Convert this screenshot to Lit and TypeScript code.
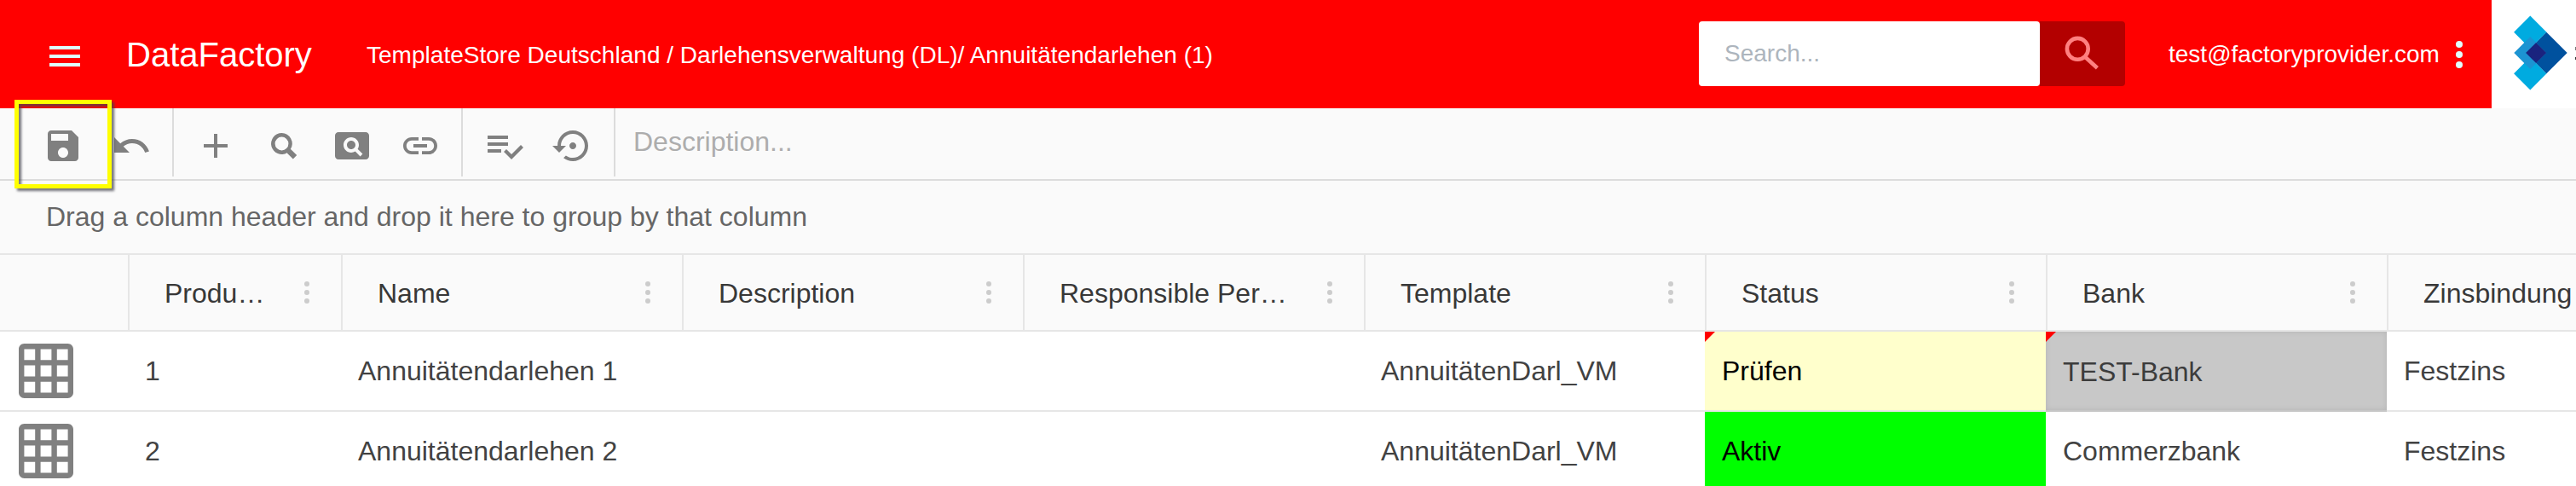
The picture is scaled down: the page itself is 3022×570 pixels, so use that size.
import { LitElement, html, css, svg } from "lit";
import { customElement, property } from "lit/decorators.js";
import { classMap } from "lit/directives/class-map.js";

const ICONS: Record<string, string> = {
  save: "M17 3H5c-1.11 0-2 .9-2 2v14c0 1.1.89 2 2 2h14c1.1 0 2-.9 2-2V7l-4-4zm-5 16c-1.66 0-3-1.34-3-3s1.34-3 3-3 3 1.34 3 3-1.34 3-3 3zm3-10H5V5h10v4z",
  undo: "M12.5 8c-2.65 0-5.05.99-6.9 2.6L2 7v9h9l-3.62-3.62c1.39-1.16 3.16-1.88 5.12-1.88 3.54 0 6.55 2.31 7.6 5.5l2.37-.78C21.08 11.03 17.15 8 12.5 8z",
  add: "M19 13h-6v6h-2v-6H5v-2h6V5h2v6h6v2z",
  search: "M10.75 4.5a6.25 6.25 0 1 0 3.2 11.62l.15.38 3.3 3.2 2.2-2.2-3.3-3.3-.4-.15A6.25 6.25 0 0 0 10.75 4.5zm0 2.3a3.95 3.95 0 1 1 0 7.9 3.95 3.95 0 0 1 0-7.9z",
  pageview: "M11.5 9C10.12 9 9 10.12 9 11.5s1.12 2.5 2.5 2.5 2.5-1.12 2.5-2.5S12.88 9 11.5 9zM20 4H4c-1.1 0-2 .9-2 2v12c0 1.1.9 2 2 2h16c1.1 0 2-.9 2-2V6c0-1.1-.9-2-2-2zm-3.21 14.21l-2.91-2.91c-.69.44-1.51.7-2.39.7C9.01 16 7 13.99 7 11.5S9.01 7 11.5 7 16 9.01 16 11.5c0 .88-.26 1.69-.7 2.39l2.91 2.9-1.42 1.42z",
  link: "M3.9 12c0-1.71 1.39-3.1 3.1-3.1h4V7H7c-2.76 0-5 2.24-5 5s2.24 5 5 5h4v-1.9H7c-1.71 0-3.1-1.39-3.1-3.1zM8 13h8v-2H8v2zm9-6h-4v1.9h4c1.71 0 3.1 1.39 3.1 3.1s-1.39 3.1-3.1 3.1h-4V17h4c2.76 0 5-2.24 5-5s-2.24-5-5-5z",
  check: "M14 10H2v2h12v-2zm0-4H2v2h12V6zM2 16h8v-2H2v2zm19.5-4.5L23 13l-6.99 7-4.51-4.5L13 14l3.01 3 5.49-5.5z",
  restore: "M14 12c0-1.1-.9-2-2-2s-2 .9-2 2 .9 2 2 2 2-.9 2-2zm-2-9c-4.97 0-9 4.03-9 9H0l4 4 4-4H5c0-3.87 3.13-7 7-7s7 3.13 7 7-3.13 7-7 7c-1.51 0-2.91-.49-4.06-1.3l-1.42 1.44C8.04 20.3 9.94 21 12 21c4.97 0 9-4.03 9-9s-4.03-9-9-9z",
  grid: "M20 2H4c-1.1 0-2 .9-2 2v16c0 1.1.9 2 2 2h16c1.1 0 2-.9 2-2V4c0-1.1-.9-2-2-2zM8 20H4v-4h4v4zm0-6H4v-4h4v4zm0-6H4V4h4v4zm6 12h-4v-4h4v4zm0-6h-4v-4h4v4zm0-6h-4V4h4v4zm6 12h-4v-4h4v4zm0-6h-4v-4h4v4zm0-6h-4V4h4v4z",
};

@customElement("df-icon")
class DfIcon extends LitElement {
  @property() name = "save";
  static styles = css`
    :host { display: block; flex: none; width: 48px; height: 48px; color: #808080; }
    svg { display: block; width: 100%; height: 100%; fill: currentColor; }
  `;
  render() {
    const box = this.name === "grid" ? "2 2 20 20" : "0 0 24 24";
    return html`<svg viewBox=${box}>${svg`<path d=${ICONS[this.name]}></path>`}</svg>`;
  }
}

@customElement("df-header")
class DfHeader extends LitElement {
  static styles = css`
    :host { display: flex; align-items: center; height: 127px; background: #f00; color: #fff; font-size: 28px; white-space: nowrap; }
    .menu { display: grid; gap: 6px; width: 36px; margin: 5px 54px 0 58px; }
    .menu i { height: 4px; background: #e0ffff; }
    .title { width: 282px; font-size: 40px; line-height: 46px; }
    .crumb { flex: 1; line-height: 32px; padding-top: 3px; letter-spacing: 0.02px; }
    .search { display: flex; width: 500px; height: 76px; margin-right: 51px; margin-top: -1px; }
    .field { box-sizing: border-box; width: 400px; padding: 22px 30px; line-height: 32px; background: #fff; color: #adb5bd; border-radius: 4px; }
    .go { width: 100px; background: #b30000; border-radius: 0 4px 4px 0; }
    .go svg { display: block; }
    .user { width: 337px; line-height: 32px; padding-top: 1px; }
    .more { display: grid; gap: 4px; width: 8px; margin-right: 34px; padding-top: 1px; }
    .more i { height: 8px; border-radius: 50%; background: #e0ffff; }
    .logo { width: 99px; height: 127px; background: #fff; }
    .logo svg { display: block; }
  `;
  render() {
    return html`
      <div class="menu"><i></i><i></i><i></i></div>
      <div class="title">DataFactory</div>
      <div class="crumb">TemplateStore Deutschland / Darlehensverwaltung (DL)/ Annuitätendarlehen (1)</div>
      <div class="search">
        <div class="field">Search...</div>
        <div class="go">
          <svg width="100" height="76" fill="none" stroke="#ff8080">
            <circle cx="44.3" cy="32.3" r="12.4" stroke-width="4.6"></circle>
            <path d="M53.6 42.3 L67.4 54.8" stroke-width="4.6"></path>
          </svg>
        </div>
      </div>
      <div class="user">test@factoryprovider.com</div>
      <div class="more"><i></i><i></i><i></i></div>
      <div class="logo">
        <svg width="99" height="127">
          <path fill="#00abe0" d="M45.3 18.5 L64.5 37.7 L45.3 56.9 L26.1 37.7Z M45.3 67.1 L64.5 86.3 L45.3 105.5 L26.1 86.3Z"></path>
          <path fill="#00519e" d="M64.4 37.7 L88.7 62 L64.4 86.3 L40.1 62Z"></path>
          <path fill="#1c94d2" d="M45.3 43 L64.3 62 L45.3 81 L26.3 62Z"></path>
          <path fill="#1a237e" d="M52.2 49.9 L64.3 62 L52.2 74.1 L40.1 62Z"></path>
          <path fill="#777" d="M98 55h1v4h-1z"></path>
          <path fill="#333" d="M98 67h1v3h-1z"></path>
        </svg>
      </div>
    `;
  }
}

@customElement("df-toolbar")
class DfToolbar extends LitElement {
  static styles = css`
    :host { display: flex; position: relative; height: 83px; background: #fafafa; border-bottom: 2px solid #dcdcdc; }
    .group { box-sizing: border-box; display: flex; gap: 32px; height: 80px; padding: 20px 24px 0 25px; border-right: 2px solid #dcdcdc; }
    .group.first { padding-left: 50px; }
    .desc { padding: 21px; font-size: 32px; line-height: 36px; color: #adadad; }
    .mark { position: absolute; left: 17px; top: -10px; width: 104px; height: 94px; border: 5px solid #ff0; filter: drop-shadow(3px 3px 1.5px rgba(70, 70, 80, 0.75)); }
  `;
  render() {
    const groups = [["save", "undo"], ["add", "search", "pageview", "link"], ["check", "restore"]];
    return html`
      ${groups.map((g, i) => html`<div class=${classMap({ group: true, first: i === 0 })}>
        ${g.map((n) => html`<df-icon name=${n}></df-icon>`)}
      </div>`)}
      <div class="desc">Description...</div>
      <div class="mark"></div>
    `;
  }
}

interface Cell { text: string; tone?: string; flag?: boolean; }

@customElement("df-grid")
class DfGrid extends LitElement {
  static styles = css`
    :host { display: block; font-size: 32px; line-height: 36px; white-space: nowrap; }
    .drop { box-sizing: border-box; height: 87px; padding: 24px 54px 0; background: #fafafa; color: #666; border-bottom: 2px solid #e6e6e6; }
    .row { display: grid; grid-template-columns: 150px 250px repeat(7, 400px); overflow: hidden; }
    .head { height: 88px; background: #fafafa; color: #383838; border-bottom: 2px solid #e6e6e6; }
    .th { box-sizing: border-box; display: flex; align-items: center; min-width: 0; padding: 2px 37px 0 41px; border-left: 2px solid #e6e6e6; }
    .th.blank { border-left: 0; }
    .label { flex: 1; overflow: hidden; text-overflow: ellipsis; }
    .dots { display: grid; gap: 4px; width: 6px; margin-left: 38px; padding-bottom: 2px; }
    .dots i { height: 6px; border-radius: 50%; background: #ccc; }
    .td { box-sizing: border-box; height: 94px; padding: 28px 20px 0; border-bottom: 2px solid #e6e6e6; color: #424242; position: relative; }
    .td.icon { padding: 14px 22px 0; }
    .td.icon df-icon { width: 64px; height: 64px; }
    .td.review { background: #ffffcc; color: #000; }
    .td.active { background: #0f0; color: #000; }
    .td.picked { background: #c8c8c8; border-bottom-color: #c6c6c6; padding-top: 29px; color: #3c3c3c; box-shadow: inset 0 0 6px rgba(0, 0, 0, 0.1); }
    .flag { position: absolute; left: 0; top: 0; width: 12px; height: 12px; background: #f00; clip-path: polygon(0 0, 100% 0, 0 100%); }
  `;
  heads = ["Product No", "Name", "Description", "Responsible Person", "Template", "Status", "Bank", "Zinsbindung"];
  rows: Cell[][] = [
    [{ text: "1" }, { text: "Annuitätendarlehen 1" }, { text: "" }, { text: "" }, { text: "AnnuitätenDarl_VM" },
      { text: "Prüfen", tone: "review", flag: true }, { text: "TEST-Bank", tone: "picked", flag: true }, { text: "Festzins" }],
    [{ text: "2" }, { text: "Annuitätendarlehen 2" }, { text: "" }, { text: "" }, { text: "AnnuitätenDarl_VM" },
      { text: "Aktiv", tone: "active" }, { text: "Commerzbank" }, { text: "Festzins" }],
  ];
  render() {
    return html`
      <div class="drop">Drag a column header and drop it here to group by that column</div>
      <div class="row head">
        <div class="th blank"></div>
        ${this.heads.map((h) => html`<div class="th"><span class="label">${h}</span><span class="dots"><i></i><i></i><i></i></span></div>`)}
      </div>
      ${this.rows.map((r) => html`<div class="row">
        <div class="td icon"><df-icon name="grid"></df-icon></div>
        ${r.map((c) => html`<div class="td ${c.tone ?? ""}">${c.flag ? html`<i class="flag"></i>` : ""}${c.text}</div>`)}
      </div>`)}
    `;
  }
}

@customElement("app-root")
class AppRoot extends LitElement {
  static styles = css`
    :host { display: block; width: 100%; height: 570px; overflow: hidden; background: #fff; font-family: "Liberation Sans", Arial, sans-serif; }
  `;
  render() {
    return html`<df-header></df-header><df-toolbar></df-toolbar><df-grid></df-grid>`;
  }
}
